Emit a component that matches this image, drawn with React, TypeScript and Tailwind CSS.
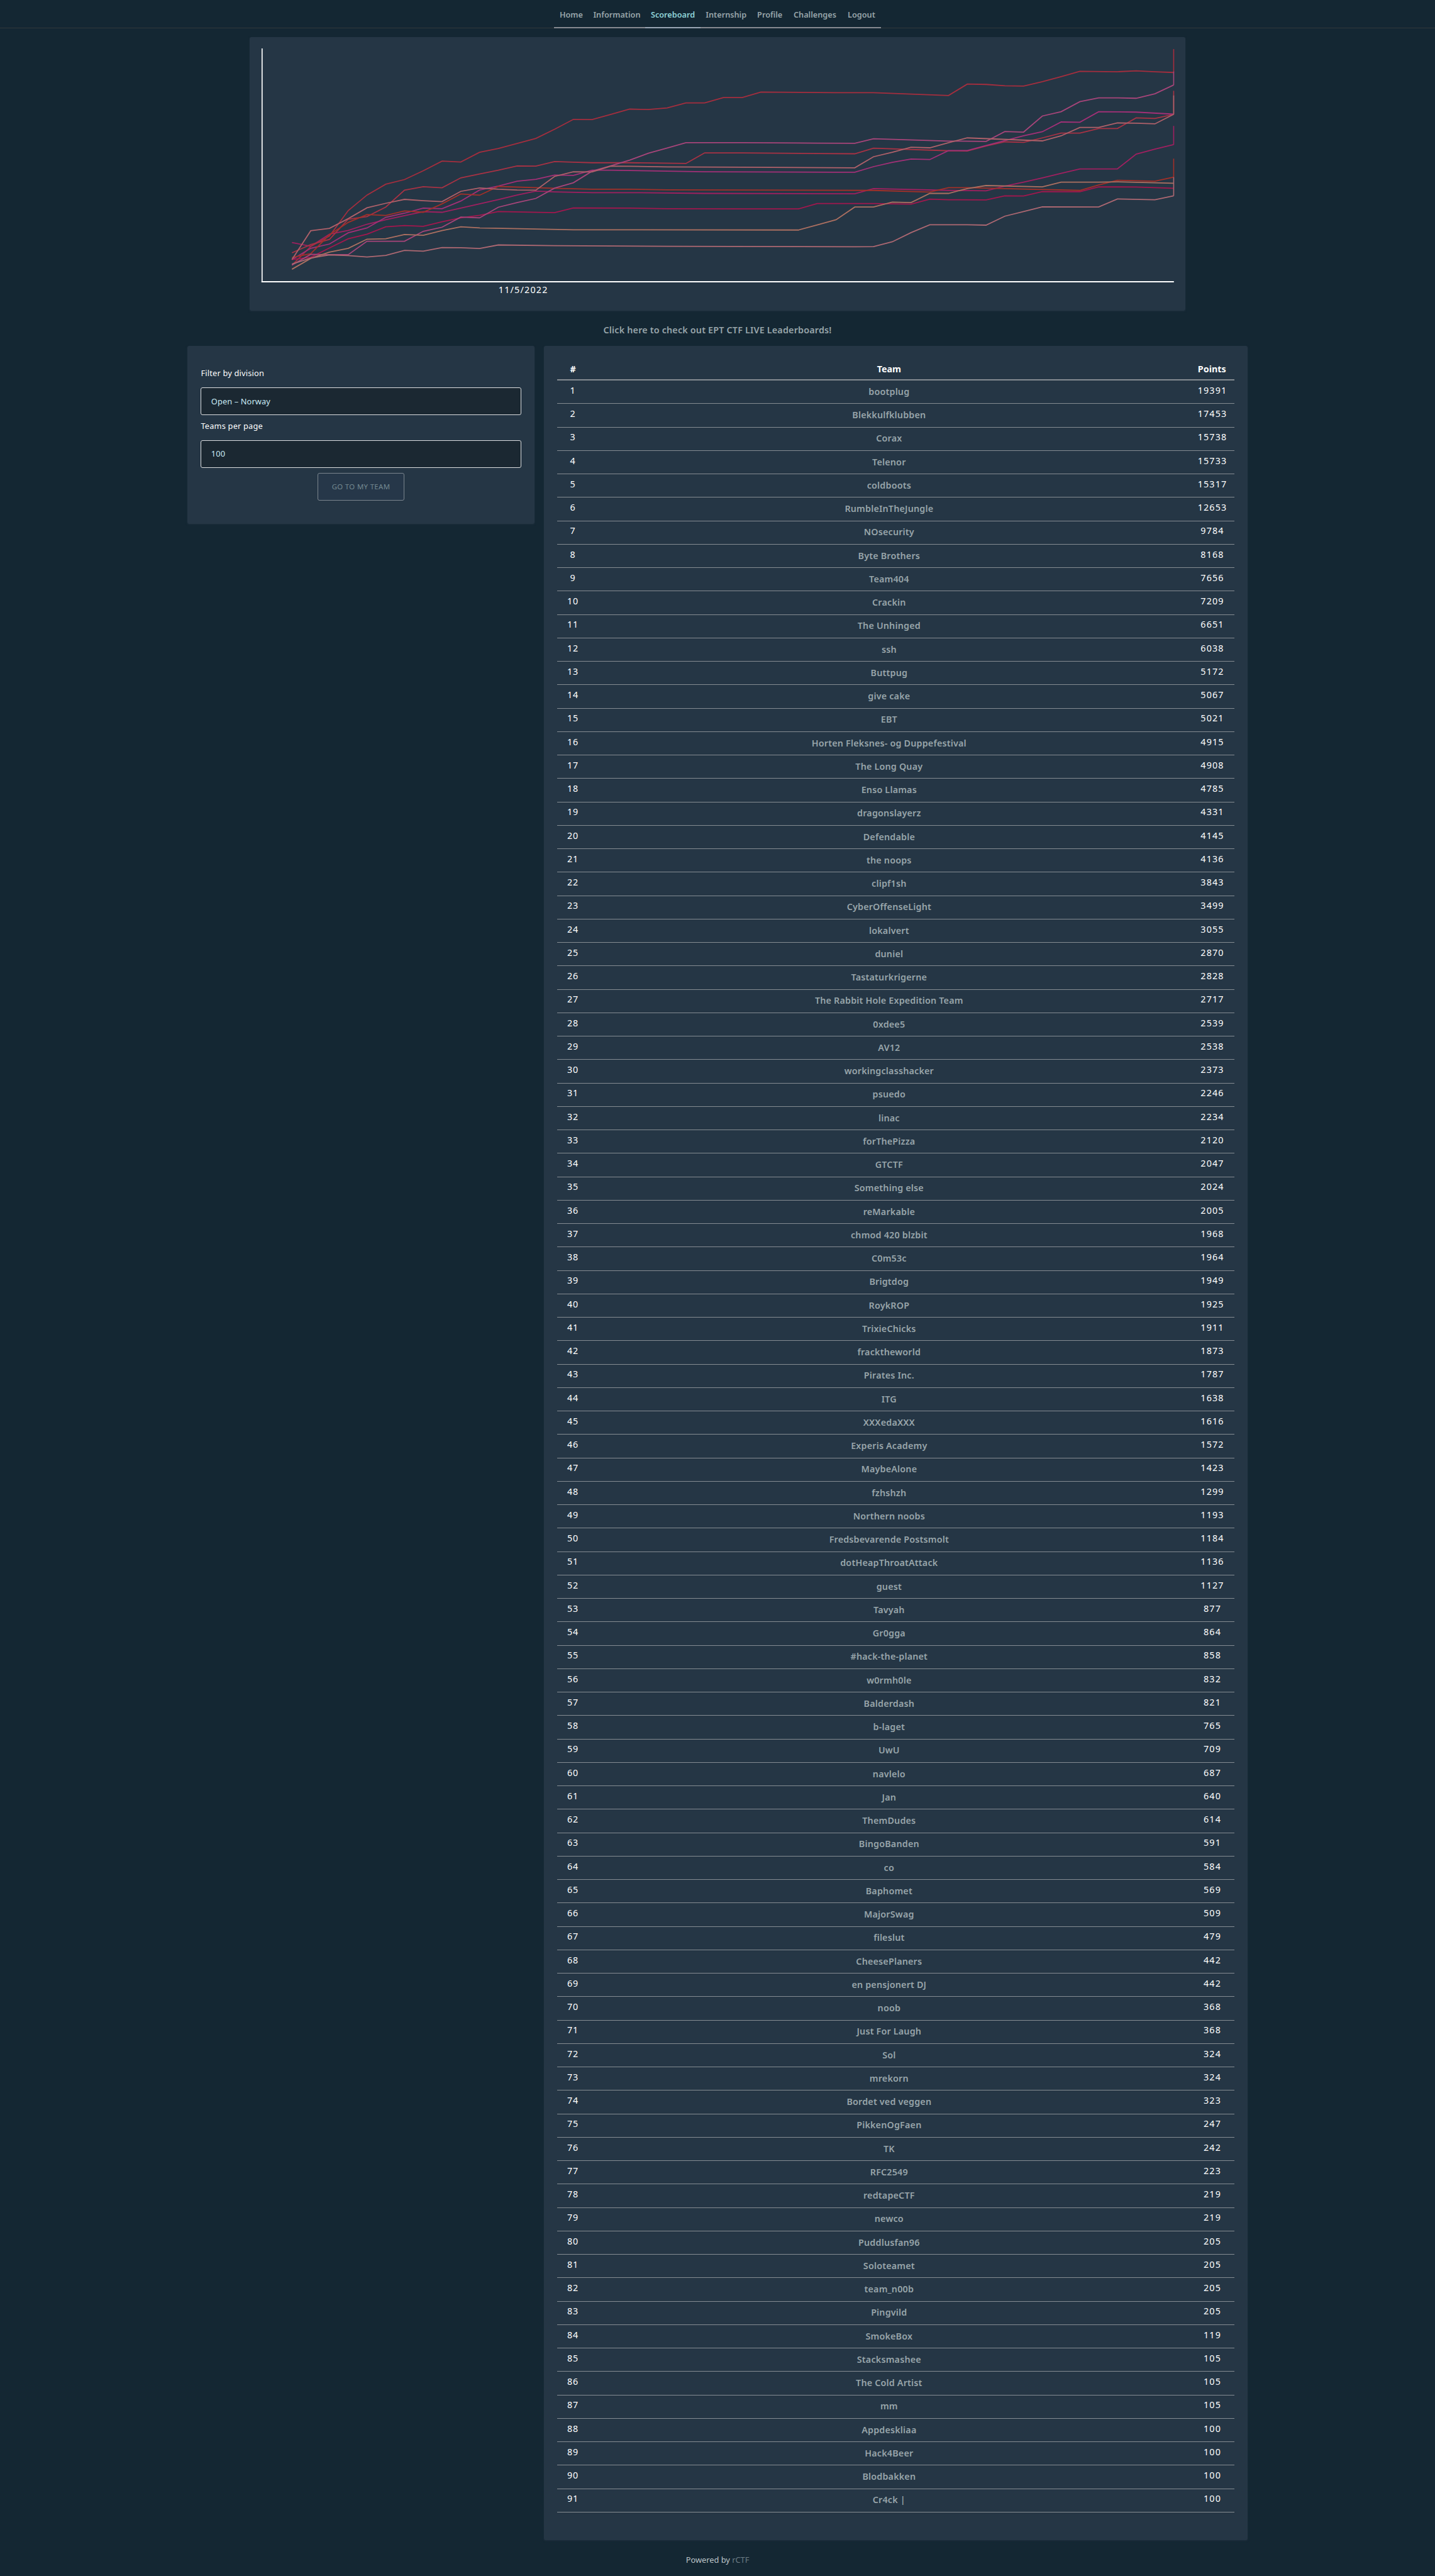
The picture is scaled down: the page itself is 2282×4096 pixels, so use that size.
import React from "react";

const nav: { label: string; width: string }[] = [
  { label: "Home", width: "w-[55.1px]" },
  { label: "Information", width: "w-[90px]" },
  { label: "Scoreboard", width: "w-[88.2px]" },
  { label: "Internship", width: "w-[81.1px]" },
  { label: "Profile", width: "w-[57.9px]" },
  { label: "Challenges", width: "w-[85.6px]" },
  { label: "Logout", width: "w-[62.4px]" },
];

const teams: [string, number][] = [
  ["bootplug", 19391], ["Blekkulfklubben", 17453], ["Corax", 15738], ["Telenor", 15733],
  ["coldboots", 15317], ["RumbleInTheJungle", 12653], ["NOsecurity", 9784], ["Byte Brothers", 8168],
  ["Team404", 7656], ["Crackin", 7209], ["The Unhinged", 6651], ["ssh", 6038], ["Buttpug", 5172],
  ["give cake", 5067], ["EBT", 5021], ["Horten Fleksnes- og Duppefestival", 4915],
  ["The Long Quay", 4908], ["Enso Llamas", 4785], ["dragonslayerz", 4331], ["Defendable", 4145],
  ["the noops", 4136], ["clipf1sh", 3843], ["CyberOffenseLight", 3499], ["lokalvert", 3055],
  ["duniel", 2870], ["Tastaturkrigerne", 2828], ["The Rabbit Hole Expedition Team", 2717],
  ["0xdee5", 2539], ["AV12", 2538], ["workingclasshacker", 2373], ["psuedo", 2246], ["linac", 2234],
  ["forThePizza", 2120], ["GTCTF", 2047], ["Something else", 2024], ["reMarkable", 2005],
  ["chmod 420 blzbit", 1968], ["C0m53c", 1964], ["Brigtdog", 1949], ["RoykROP", 1925],
  ["TrixieChicks", 1911], ["fracktheworld", 1873], ["Pirates Inc.", 1787], ["ITG", 1638],
  ["XXXedaXXX", 1616], ["Experis Academy", 1572], ["MaybeAlone", 1423], ["fzhshzh", 1299],
  ["Northern noobs", 1193], ["Fredsbevarende Postsmolt", 1184], ["dotHeapThroatAttack", 1136],
  ["guest", 1127], ["Tavyah", 877], ["Gr0gga", 864], ["#hack-the-planet", 858], ["w0rmh0le", 832],
  ["Balderdash", 821], ["b-laget", 765], ["UwU", 709], ["navlelo", 687], ["Jan", 640],
  ["ThemDudes", 614], ["BingoBanden", 591], ["co", 584], ["Baphomet", 569], ["MajorSwag", 509],
  ["fileslut", 479], ["CheesePlaners", 442], ["en pensjonert DJ", 442], ["noob", 368],
  ["Just For Laugh", 368], ["Sol", 324], ["mrekorn", 324], ["Bordet ved veggen", 323],
  ["PikkenOgFaen", 247], ["TK", 242], ["RFC2549", 223], ["redtapeCTF", 219], ["newco", 219],
  ["Puddlusfan96", 205], ["Soloteamet", 205], ["team_n00b", 205], ["Pingvild", 205],
  ["SmokeBox", 119], ["Stacksmashee", 105], ["The Cold Artist", 105], ["mm", 105],
  ["Appdeskliaa", 100], ["Hack4Beer", 100], ["Blodbakken", 100], ["Cr4ck |", 100],
];

type Series = { color: string; points: [number, number][]; end?: number };

// Each point is [time step, height below the top in thirds of a unit].
const series: Series[] = [
  { color: "#a02060", end: 523, points: [[0,1147],[1,1167],[2,1102],[3,1082],[4,1049],[5,1025],[6,1003],[7,982],[8,985],[9,963],[10,940],[11,917],[12,893],[13,872],[14,876],[16,880],[18,880],[22,884],[30,886],[31,858],[35,868],[37,870],[38,845],[39,824],[40,801],[41,777],[42,753],[44,753],[45,674],[46,647],[47,623]] },
  { color: "#a52e3e", end: 112, points: [[0,1268],[1,1168],[2,1112],[3,976],[4,893],[5,835],[6,810],[7,763],[8,711],[9,716],[10,664],[11,644],[12,617],[13,590],[14,541],[15,488],[16,489],[17,461],[18,433],[19,435],[20,427],[21,400],[22,400],[23,371],[24,371],[25,342],[29,345],[31,345],[35,360],[36,299],[37,301],[38,308],[39,310],[40,286],[41,259],[42,231],[44,233],[45,228],[46,233],[47,237]] },
  { color: "#a83244", end: 335, points: [[0,1202],[1,1158],[2,1130],[3,1022],[4,1008],[5,957],[6,867],[7,848],[8,854],[9,801],[10,780],[11,760],[12,737],[13,738],[14,714],[15,717],[16,720],[18,720],[21,724],[22,667],[24,667],[28,671],[30,672],[31,642],[35,656],[36,657],[37,630],[38,608],[39,611],[40,587],[41,561],[42,561],[43,537],[44,537],[45,480],[46,483],[47,461]] },
  { color: "#a33077", points: [[0,1238],[1,1178],[2,1155],[3,1095],[4,1069],[5,1012],[6,990],[7,963],[8,966],[9,925],[10,866],[11,845],[12,819],[13,809],[14,786],[15,788],[16,760],[17,760],[22,768],[29,771],[30,771],[31,741],[32,718],[33,700],[34,703],[35,655],[36,655],[37,628],[38,602],[39,576],[40,554],[41,502],[42,503],[43,447],[45,449],[47,460]] },
  { color: "#a33029", end: 698, points: [[0,1227],[1,1207],[2,1105],[3,1039],[4,997],[5,1002],[6,978],[7,985],[8,940],[9,887],[10,894],[11,847],[14,857],[16,862],[18,862],[20,865],[31,868],[34,877],[35,853],[36,853],[39,861],[42,868],[43,839],[44,814],[46,819],[47,797]] },
  { color: "#a3174e", points: [[0,1238],[1,1226],[2,1176],[3,1127],[4,1102],[5,1063],[6,1056],[7,1060],[8,1036],[9,1015],[10,1001],[11,981],[14,987],[15,962],[18,963],[20,966],[24,967],[27,967],[28,938],[31,938],[33,942],[34,915],[35,918],[37,919],[38,897],[39,898],[40,874],[42,875],[43,849],[45,850],[47,857]] },
  { color: "#a8457a", end: 232, points: [[0,1268],[1,1210],[2,1212],[3,1212],[4,1140],[6,1140],[7,1087],[8,1065],[9,1011],[10,1015],[11,958],[12,933],[13,911],[14,856],[15,827],[16,765],[17,736],[18,706],[19,669],[20,641],[21,613],[24,613],[28,615],[30,616],[31,592],[35,604],[37,606],[38,553],[39,556],[40,470],[41,447],[42,393],[43,373],[44,373],[45,375],[46,351],[47,304]] },
  { color: "#b0616a", end: 360, points: [[0,1238],[1,1084],[2,1071],[3,1019],[4,961],[5,937],[6,916],[7,923],[8,928],[9,873],[10,855],[11,862],[12,866],[13,867],[14,793],[15,768],[16,769],[17,738],[18,739],[20,742],[24,744],[30,747],[31,688],[32,664],[33,637],[34,640],[35,613],[36,587],[40,603],[41,576],[42,531],[43,531],[44,507],[45,508],[46,512],[47,461]] },
  { color: "#ad7061", points: [[0,1290],[1,1232],[2,1198],[3,1178],[4,1129],[5,1127],[6,1104],[7,1108],[8,1083],[9,1063],[10,1069],[15,1079],[18,1079],[27,1080],[28,1053],[29,1025],[30,957],[31,957],[32,931],[33,933],[34,884],[35,884],[36,858],[37,842],[40,849],[41,824],[43,824],[44,822],[47,830]] },
  { color: "#ad6872", end: 797, points: [[0,1262],[1,1230],[2,1213],[3,1217],[4,1224],[5,1216],[6,1189],[7,1193],[8,1174],[9,1175],[10,1179],[11,1160],[14,1164],[20,1167],[30,1170],[31,1169],[32,1143],[33,1094],[34,1052],[36,1052],[37,1054],[38,1006],[39,981],[40,956],[43,957],[44,914],[46,918],[47,897]] },
];

const px = (step: number) => 520.5 + step * 33.466;
const py = (v: number) => 50 + v / 3;

function Chart() {
  return (
    <section className="ml-[396.5px] h-[435.2px] w-[1488.7px] rounded-[3px] bg-[#253645] shadow-[0_1px_3px_rgba(37,54,69,0.6)]">
      <svg viewBox="445 66 1670 488" className="block h-full w-full" fill="none">
        {series.map((s, i) => (
          <polyline
            key={i}
            points={s.points.map(([t, v]) => `${px(t)},${py(v)}`).join(" ")}
            stroke={s.color}
            strokeWidth={2}
          />
        ))}
        {series.map((s, i) =>
          s.end === undefined ? null : (
            <line
              key={i}
              x1={px(47)}
              x2={px(47)}
              y1={py(s.points[s.points.length - 1][1])}
              y2={py(s.end)}
              stroke={s.color}
              strokeWidth={1.8}
            />
          ),
        )}
        <line x1="467.2" y1="86" x2="467.2" y2="503.5" stroke="#fff" strokeWidth={1.9} />
        <line x1="466" y1="502.3" x2="2093.8" y2="502.3" stroke="#fff" strokeWidth={2.4} />
        <text
          x="889"
          y="522.2"
          fill="#fff"
          textLength="87"
          className="font-['Noto_Sans'] text-[16px]"
        >
          11/5/2022
        </text>
      </svg>
    </section>
  );
}

function Select({ label, value }: { label: string; value: string }) {
  return (
    <div className="mb-[6.3px] h-[77.5px] w-full">
      <div className="h-[32.9px] pt-[1px] text-[12.8px] leading-[19px] tracking-[0.015em] text-white">{label}</div>
      <div className="flex h-[44.6px] items-center rounded-[3px] border border-[#dcdee0] bg-[#1b2832] pl-[15.4px] text-[12.8px] tracking-[0.01em] text-[#c8eaf5]">
        {value}
      </div>
    </div>
  );
}

export default function App() {
  return (
    <div className="h-[4096px] w-[2282px] overflow-hidden bg-[#142733] font-['Noto_Sans',sans-serif] text-white">
      <nav className="flex h-[44.6px] items-end justify-center border-b border-[#32383c]">
        <div className="-mb-px flex">
          {nav.map((n) => (
            <a
              key={n.label}
              className={`${n.width} ${n.label === "Scoreboard" ? "border-[#9aa6b4] text-[#8fd3d8]" : "border-[#868a90] text-[#98a5aa]"} flex h-[28.4px] justify-center border-b-2 text-[12.7px] leading-[14px] font-semibold whitespace-nowrap`}
            >
              {n.label}
            </a>
          ))}
        </div>
      </nav>

      <div className="h-[14.2px]" />
      <Chart />

      <div className="flex h-[56px] items-center justify-center pt-[5px] text-[14.3px] font-semibold tracking-[0.2px] text-[#98a5aa]">
        <a>Click here to check out EPT CTF LIVE Leaderboards!</a>
      </div>

      <div className="flex items-start pl-[297.7px]">
        <aside className="mr-[14.3px] flex h-[282.6px] w-[552.7px] flex-col items-center rounded-[3px] bg-[#253645] px-[21.7px] pt-[33px] shadow-[0_1px_3px_rgba(37,54,69,0.6)]">
          <Select label="Filter by division" value="Open – Norway" />
          <Select label="Teams per page" value="100" />
          <button className="mt-[1px] flex h-[44.6px] w-[137.3px] shrink-0 items-center justify-center rounded-[3px] border border-[#7b858d] bg-[#263749] text-[11.4px] tracking-[0.35px] text-[#748991]">
            GO TO MY TEAM
          </button>
        </aside>

        <main className="h-[3488.6px] w-[1119.6px] rounded-[3px] bg-[#253645] px-[21.4px] pt-[20px] shadow-[0_1px_3px_rgba(37,54,69,0.6)]">
          <div className="flex h-[35.2px] items-center border-b-2 border-[#858c92] text-center text-[14.3px] font-bold">
            <div className="w-[50px]">#</div>
            <div className="flex-1">Team</div>
            <div className="w-[71.3px]">Points</div>
          </div>
          {teams.map(([name, points], i) => (
            <div
              key={name}
              className="flex h-[37.261px] border-b border-[#858c92] text-center text-[14.3px] leading-[20px]"
            >
              <div className="w-[50px] pt-[5.6px] tracking-[0.06em]">{i + 1}</div>
              <div className="flex-1 pt-[7.7px] font-semibold tracking-[0.2px] text-[#98a5aa]">{name}</div>
              <div className="w-[71.3px] pt-[5.6px] pl-[1.5px] tracking-[0.08em]">{points}</div>
            </div>
          ))}
        </main>
      </div>

      <footer className="pt-[22px] text-center text-[12.8px] leading-[18px] text-[#bcc3c8]">
        Powered by <a className="text-[#6d7d86]">rCTF</a>
      </footer>
    </div>
  );
}
